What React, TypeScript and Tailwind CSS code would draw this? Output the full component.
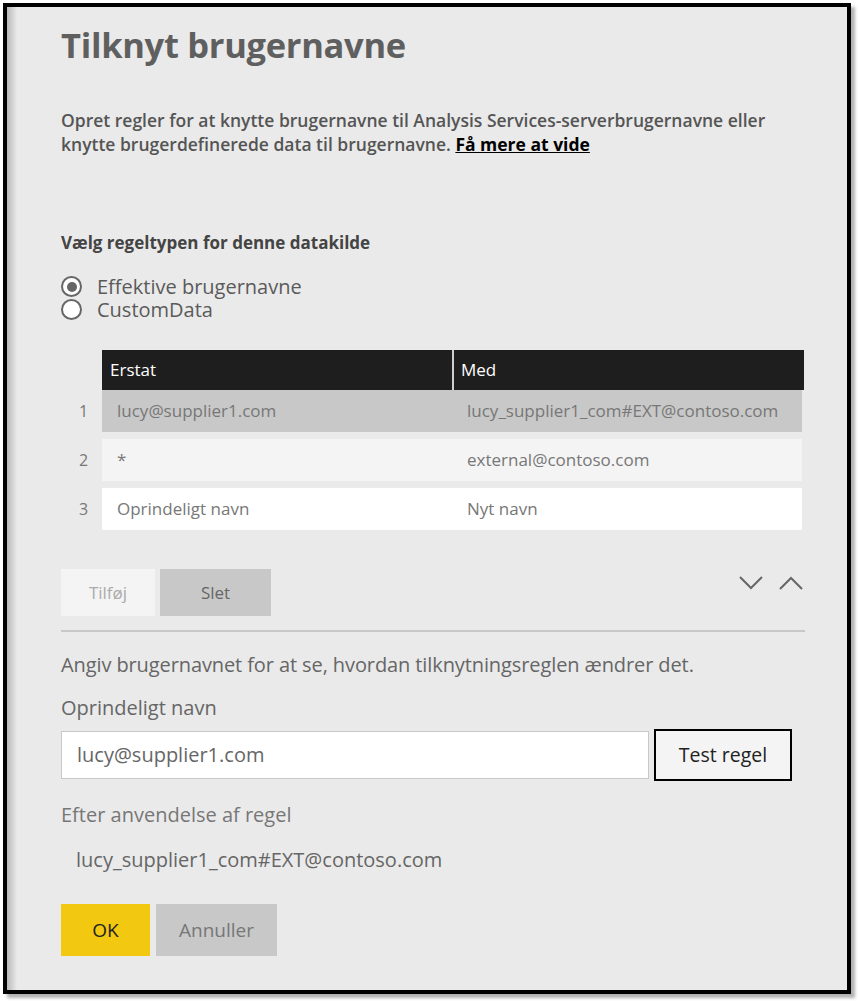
import React from "react";

const rows = [
  { n: 1, from: "lucy@supplier1.com", to: "lucy_supplier1_com#EXT@contoso.com", bg: "bg-[#c8c8c8]" },
  { n: 2, from: "*", to: "external@contoso.com", bg: "bg-[#f4f4f4]" },
  { n: 3, from: "Oprindeligt navn", to: "Nyt navn", bg: "bg-white" },
];

function Radio({ checked, label }: { checked?: boolean; label: string }) {
  return (
    <label className="flex items-center h-[23px]">
      <span className="w-[21px] h-[21px] rounded-full border-[2.5px] border-[#666] bg-white flex items-center justify-center shrink-0">
        {checked && <span className="w-[10px] h-[10px] rounded-full bg-[#666]" />}
      </span>
      <span className="ml-[15px] text-[20px] leading-[23px] text-[#5a5a5a]">{label}</span>
    </label>
  );
}

function Chevron({ up }: { up?: boolean }) {
  return (
    <svg width="24" height="14" viewBox="0 0 24 14" fill="none" stroke="#666" strokeWidth="2">
      {up ? <path d="M1 13 L12 2 L23 13" /> : <path d="M1 1 L12 12 L23 1" />}
    </svg>
  );
}

export default function App() {
  return (
    <div className="w-[860px] h-[1002px] bg-white pt-[3px] pl-[3px]" style={{ fontFamily: '"Open Sans", "Noto Sans", sans-serif' }}>
      <div className="w-[848px] h-[991px] border-4 border-black bg-[#eaeaea] shadow-[4px_4px_3px_rgba(0,0,0,0.3)] flex">
        <div className="w-[10px] shrink-0 bg-gradient-to-r from-[#b9b9b9] to-[#eaeaea]" />
        <div className="flex-1 pl-[44px] pr-[43px] pt-[18px]">
          <h1 className="text-[34.5px] leading-[40px] font-bold text-[#5f5f5f] tracking-[-0.3px]">Tilknyt brugernavne</h1>

          <p className="mt-[43px] text-[17.5px] leading-[24px] font-semibold text-[#555]">
            Opret regler for at knytte brugernavne til Analysis Services-serverbrugernavne eller knytte brugerdefinerede data til brugernavne.{" "}
            <a className="text-black underline font-bold">Få mere at vide</a>
          </p>

          <p className="mt-[75px] text-[17px] leading-[24px] font-bold text-[#444]">Vælg regeltypen for denne datakilde</p>

          <div className="mt-[20px] flex flex-col">
            <Radio checked label="Effektive brugernavne" />
            <Radio label="CustomData" />
          </div>

          <div className="mt-[29px] ml-[41px]">
            <div className="flex h-[40px] bg-[#1e1e1e] text-[17px] text-white">
              <div className="w-[352px] pl-[8px] flex items-center border-r-2 border-[#d0d0d0]">Erstat</div>
              <div className="flex-1 pl-[7px] flex items-center">Med</div>
            </div>
            {rows.map((r, i) => (
              <div key={r.n} className={`relative flex h-[42px] mr-[2px] items-center text-[17px] text-[#777] ${r.bg} ${i > 0 ? "mt-[7px]" : ""}`}>
                <span className="absolute -left-[23px] text-[16px] text-[#777]">{r.n}</span>
                <div className="w-[350px] pl-[15px]">{r.from}</div>
                <div className="flex-1 pl-[15px]">{r.to}</div>
              </div>
            ))}
          </div>

          <div className="mt-[39px] flex items-start">
            <button className="w-[94px] h-[47px] bg-[#f4f4f4] text-[17px] text-[#aaa]">Tilføj</button>
            <button className="ml-[5px] w-[111px] h-[47px] bg-[#c8c8c8] text-[17px] text-[#666]">Slet</button>
            <div className="ml-auto mt-[7px] flex gap-[16px] mr-[1px]">
              <Chevron />
              <Chevron up />
            </div>
          </div>

          <div className="mt-[14px] h-[2px] bg-[#c8c8c8] -mr-[1px]" />

          <p className="mt-[20px] text-[20px] leading-[26px] text-[#666] tracking-[-0.1px]">Angiv brugernavnet for at se, hvordan tilknytningsreglen ændrer det.</p>
          <p className="mt-[17px] text-[20px] leading-[26px] text-[#666]">Oprindeligt navn</p>

          <div className="mt-[8px] flex items-center">
            <div className="w-[588px] h-[48px] bg-white border border-[#c8c8c8] flex items-center pl-[15px] text-[20px] text-[#666]">lucy@supplier1.com</div>
            <button className="ml-[5px] w-[138px] h-[52px] bg-[#f4f4f4] border-2 border-black text-[19.5px] text-[#222]">Test regel</button>
          </div>

          <p className="mt-[21px] text-[20px] leading-[26px] text-[#777]">Efter anvendelse af regel</p>
          <p className="mt-[19px] ml-[15px] text-[20px] leading-[26px] text-[#666]">lucy_supplier1_com#EXT@contoso.com</p>

          <div className="mt-[31px] flex">
            <button className="w-[89px] h-[52px] bg-[#f2c811] text-[19px] text-[#222]">OK</button>
            <button className="ml-[6px] w-[121px] h-[52px] bg-[#c8c8c8] text-[19px] text-[#777]">Annuller</button>
          </div>
        </div>
      </div>
    </div>
  );
}
